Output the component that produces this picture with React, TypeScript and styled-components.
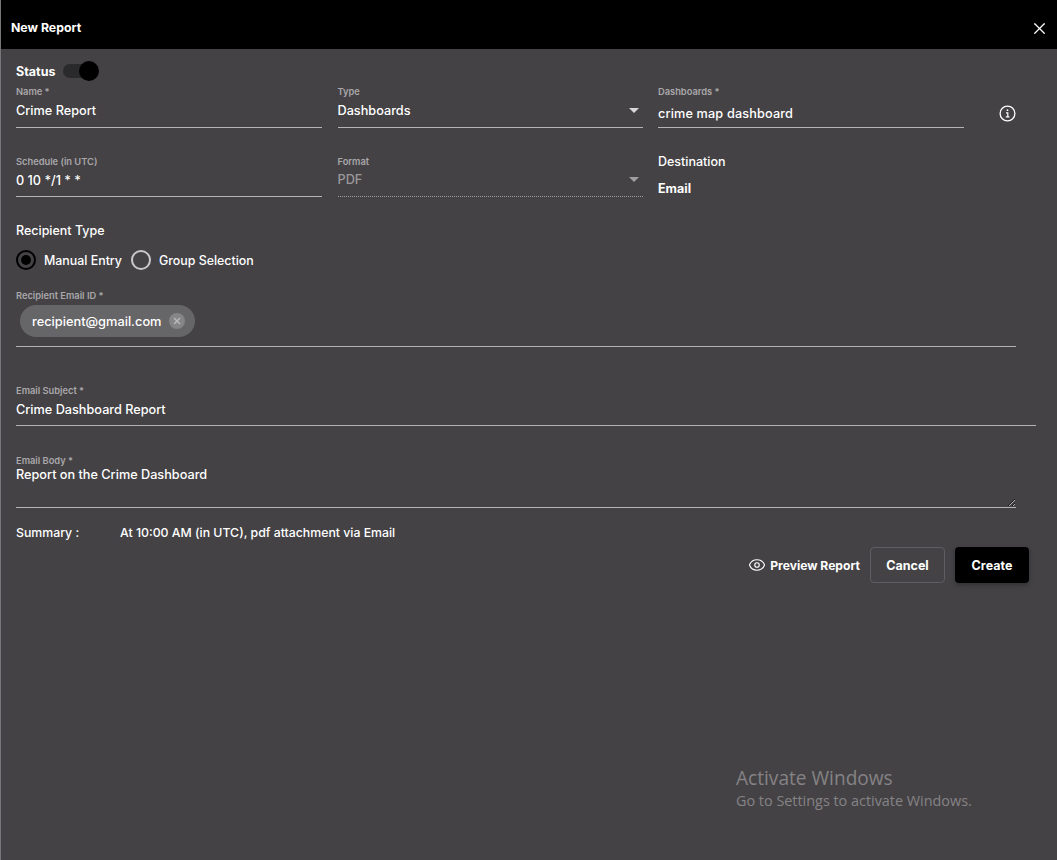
import React from 'react';
import styled, { createGlobalStyle } from 'styled-components';
import { X, Eye } from 'lucide-react';

const GlobalStyle = createGlobalStyle`
  * {
    box-sizing: border-box;
  }

  html,
  body {
    margin: 0;
    height: 100%;
    background-color: #444245;
  }

  body {
    font-family: Inter, 'Liberation Sans', sans-serif;
    color: #fff;
  }
`;

const InfoIcon = () => (
  <svg width="17" height="17" viewBox="0 0 17 17" fill="none" stroke="currentColor">
    <circle cx="8.5" cy="8.5" r="7.4" strokeWidth="1.3" />
    <circle cx="8.5" cy="5.2" r="0.9" fill="currentColor" stroke="none" />
    <path d="M7 7.8h1.8v4M6.8 11.9h3.6" strokeWidth="1.2" />
  </svg>
);

const App = () => {
  return (
    <Dialog>
      <GlobalStyle />
      <Header>
        <Title>New Report</Title>
        <CloseButton aria-label="Close">
          <X size={19} strokeWidth={1.6} />
        </CloseButton>
      </Header>

      <Body>
        <StatusRow>
          <StatusLabel>Status</StatusLabel>
          <Toggle>
            <Knob />
          </Toggle>
        </StatusRow>

        <FieldGrid>
          <Field>
            <Label>Name *</Label>
            <Input readOnly defaultValue="Crime Report" />
          </Field>
          <Field>
            <Label>Type</Label>
            <SelectValue>
              Dashboards
              <Caret />
            </SelectValue>
          </Field>
          <Field>
            <Label>Dashboards *</Label>
            <Input $lower readOnly defaultValue="crime map dashboard" />
          </Field>
          <InfoCell>
            <InfoIcon />
          </InfoCell>

          <Field>
            <Label>Schedule (in UTC)</Label>
            <Input $short readOnly defaultValue="0 10 */1 * *" />
          </Field>
          <Field>
            <Label>Format</Label>
            <SelectValue $disabled>
              PDF
              <Caret $disabled />
            </SelectValue>
          </Field>
          <Destination>
            <DestinationLabel>Destination</DestinationLabel>
            <DestinationValue>Email</DestinationValue>
          </Destination>
        </FieldGrid>

        <SectionLabel>Recipient Type</SectionLabel>
        <RadioRow>
          <RadioOption>
            <Radio $checked />
            Manual Entry
          </RadioOption>
          <RadioOption>
            <Radio />
            Group Selection
          </RadioOption>
        </RadioRow>

        <ChipField>
          <Label>Recipient Email ID *</Label>
          <Chip>
            recipient@gmail.com
            <ChipRemove>
              <X size={10} strokeWidth={3.5} />
            </ChipRemove>
          </Chip>
        </ChipField>

        <SubjectField>
          <Label>Email Subject *</Label>
          <Input $short readOnly defaultValue="Crime Dashboard Report" />
        </SubjectField>

        <BodyField>
          <Label>Email Body *</Label>
          <TextArea readOnly defaultValue="Report on the Crime Dashboard" />
        </BodyField>

        <Summary>
          <SummaryLabel>Summary :</SummaryLabel>
          <span>At 10:00 AM (in UTC), pdf attachment via Email</span>
        </Summary>

        <Actions>
          <PreviewButton>
            <Eye size={18} strokeWidth={1.5} />
            Preview Report
          </PreviewButton>
          <OutlineButton>Cancel</OutlineButton>
          <PrimaryButton>Create</PrimaryButton>
        </Actions>
      </Body>

      <Watermark>
        <WatermarkTitle>Activate Windows</WatermarkTitle>
        <WatermarkText>Go to Settings to activate Windows.</WatermarkText>
      </Watermark>
    </Dialog>
  );
};

export default App;

const Dialog = styled.div`
  position: relative;
  min-height: 860px;
  background-color: #444245;
  border-left: 1px solid #77757a;
`;

const Header = styled.header`
  height: 49px;
  padding: 0 8px 0 10px;
  display: flex;
  align-items: center;
  justify-content: space-between;
  background-color: #000;
`;

const Title = styled.h1`
  margin: 5px 0 0;
  font-size: 12.3px;
  font-weight: 700;
`;

const CloseButton = styled.button`
  padding: 0;
  margin-top: 7px;
  display: flex;
  border: 0;
  background: none;
  color: #fff;
`;

const Body = styled.main`
  padding: 11px 0 0 15px;
`;

const StatusRow = styled.div`
  height: 22px;
  display: flex;
  align-items: center;
  gap: 8px;
`;

const StatusLabel = styled.span`
  font-size: 12.5px;
  font-weight: 700;
`;

const Toggle = styled.div`
  position: relative;
  width: 26px;
  height: 14px;
  border-radius: 7px;
  background-color: #2a292c;
`;

const Knob = styled.div`
  position: absolute;
  top: -3px;
  right: -10px;
  width: 20px;
  height: 20px;
  border-radius: 50%;
  background-color: #000;
`;

const FieldGrid = styled.div`
  width: 1001px;
  display: grid;
  grid-template-columns: 306px 305px 306px 1fr;
  column-gap: 15.5px;
  row-gap: 27px;
  margin-top: 3px;
`;

const Field = styled.div`
  display: flex;
  flex-direction: column;
`;

const Label = styled.label`
  display: block;
  height: 12px;
  font-size: 9.3px;
  line-height: 14px;
  font-weight: 600;
  color: #a9a7aa;
`;

const Input = styled.input<{ $lower?: boolean; $short?: boolean }>`
  width: 100%;
  height: ${(p) => (p.$short ? '30px' : '31px')};
  padding: ${(p) => (p.$lower ? '2px 0 0' : p.$short ? '0 0 3px' : '0 0 4px')};
  border: 0;
  border-bottom: 1px solid #b4b3b5;
  outline: none;
  background: none;
  font-family: inherit;
  font-size: 12.7px;
  font-weight: 500;
  letter-spacing: ${(p) => (p.$lower ? '0.15px' : '0')};
  color: #fff;
`;

const SelectValue = styled.div<{ $disabled?: boolean }>`
  height: ${(p) => (p.$disabled ? '30px' : '31px')};
  padding-bottom: 4px;
  display: flex;
  align-items: center;
  justify-content: space-between;
  border-bottom: 1px ${(p) => (p.$disabled ? 'dotted #a09ea1' : 'solid #b4b3b5')};
  font-size: 12.7px;
  font-weight: 500;
  color: ${(p) => (p.$disabled ? '#9b999c' : '#fff')};
`;

const Caret = styled.span<{ $disabled?: boolean }>`
  width: 0;
  height: 0;
  margin-right: 4px;
  border-left: 5px solid transparent;
  border-right: 5px solid transparent;
  border-top: 5px solid ${(p) => (p.$disabled ? '#a09ea1' : '#d8d7d9')};
`;

const InfoCell = styled.div`
  padding: 20px 0 0 19px;
  color: #fff;

  & > svg {
    display: block;
  }
`;

const Destination = styled.div`
  margin-top: -1px;
  display: flex;
  flex-direction: column;
  gap: 13px;
`;

const DestinationLabel = styled.span`
  height: 14px;
  font-size: 12.5px;
  font-weight: 500;
`;

const DestinationValue = styled.span`
  font-size: 12.5px;
  font-weight: 700;
`;

const SectionLabel = styled.div`
  margin-top: 26px;
  font-size: 12.5px;
  line-height: 16px;
  font-weight: 500;
`;

const RadioRow = styled.div`
  margin-top: 11px;
  display: flex;
  gap: 9px;
`;

const RadioOption = styled.div`
  display: flex;
  align-items: center;
  gap: 8px;
  font-size: 12.4px;
  font-weight: 500;
`;

const Radio = styled.span<{ $checked?: boolean }>`
  width: 20px;
  height: 20px;
  display: flex;
  align-items: center;
  justify-content: center;
  border: 2px solid ${(p) => (p.$checked ? '#000' : '#c9c8ca')};
  border-radius: 50%;

  &::after {
    content: '';
    width: 10px;
    height: 10px;
    border-radius: 50%;
    background-color: ${(p) => (p.$checked ? '#000' : 'transparent')};
  }
`;

const ChipField = styled.div`
  width: 1000px;
  height: 58px;
  margin-top: 19px;
  border-bottom: 1px solid #b4b3b5;
`;

const Chip = styled.div`
  width: 175px;
  height: 32px;
  margin: 4px 0 0 4px;
  padding: 0 10px 0 12px;
  display: flex;
  align-items: center;
  justify-content: space-between;
  border-radius: 16px;
  background-color: #666567;
  font-size: 12.8px;
  font-weight: 500;
`;

const ChipRemove = styled.span`
  width: 16px;
  height: 16px;
  display: flex;
  align-items: center;
  justify-content: center;
  border-radius: 50%;
  background-color: #858486;
  color: #b9b8ba;
`;

const SubjectField = styled(Field)`
  width: 1020px;
  margin-top: 37px;
`;

const BodyField = styled(Field)`
  width: 1000px;
  margin-top: 28px;
`;

const TextArea = styled.textarea`
  width: 100%;
  height: 42px;
  padding: 0;
  border: 0;
  border-bottom: 1px solid #b4b3b5;
  outline: none;
  background: none;
  font-family: inherit;
  font-size: 12.7px;
  line-height: 18px;
  font-weight: 500;
  color: #fff;
`;

const Summary = styled.div`
  margin-top: 17px;
  display: flex;
  font-size: 12.3px;
  line-height: 16px;
  font-weight: 500;
`;

const SummaryLabel = styled.span`
  width: 104px;
`;

const Actions = styled.div`
  width: 1013px;
  margin-top: 6px;
  display: flex;
  justify-content: flex-end;
  gap: 10px;
`;

const ActionButton = styled.button`
  height: 36px;
  border-radius: 4px;
  font-family: inherit;
  font-size: 12.5px;
  font-weight: 700;
  color: #fff;
`;

const PreviewButton = styled(ActionButton)`
  padding: 0;
  display: flex;
  align-items: center;
  gap: 4px;
  border: 0;
  background: none;
  font-size: 12.1px;
`;

const OutlineButton = styled(ActionButton)`
  width: 75px;
  border: 1px solid #5f5d61;
  background: none;
`;

const PrimaryButton = styled(ActionButton)`
  width: 74px;
  border: 0;
  background-color: #000;
  box-shadow: 0 2px 4px rgba(0, 0, 0, 0.3);
`;

const Watermark = styled.div`
  position: absolute;
  left: 735px;
  top: 766px;
  font-family: 'Open Sans', sans-serif;
  color: #858386;
`;

const WatermarkTitle = styled.div`
  font-size: 19.1px;
  line-height: 25px;
`;

const WatermarkText = styled.div`
  font-size: 14.4px;
  line-height: 20px;
`;
